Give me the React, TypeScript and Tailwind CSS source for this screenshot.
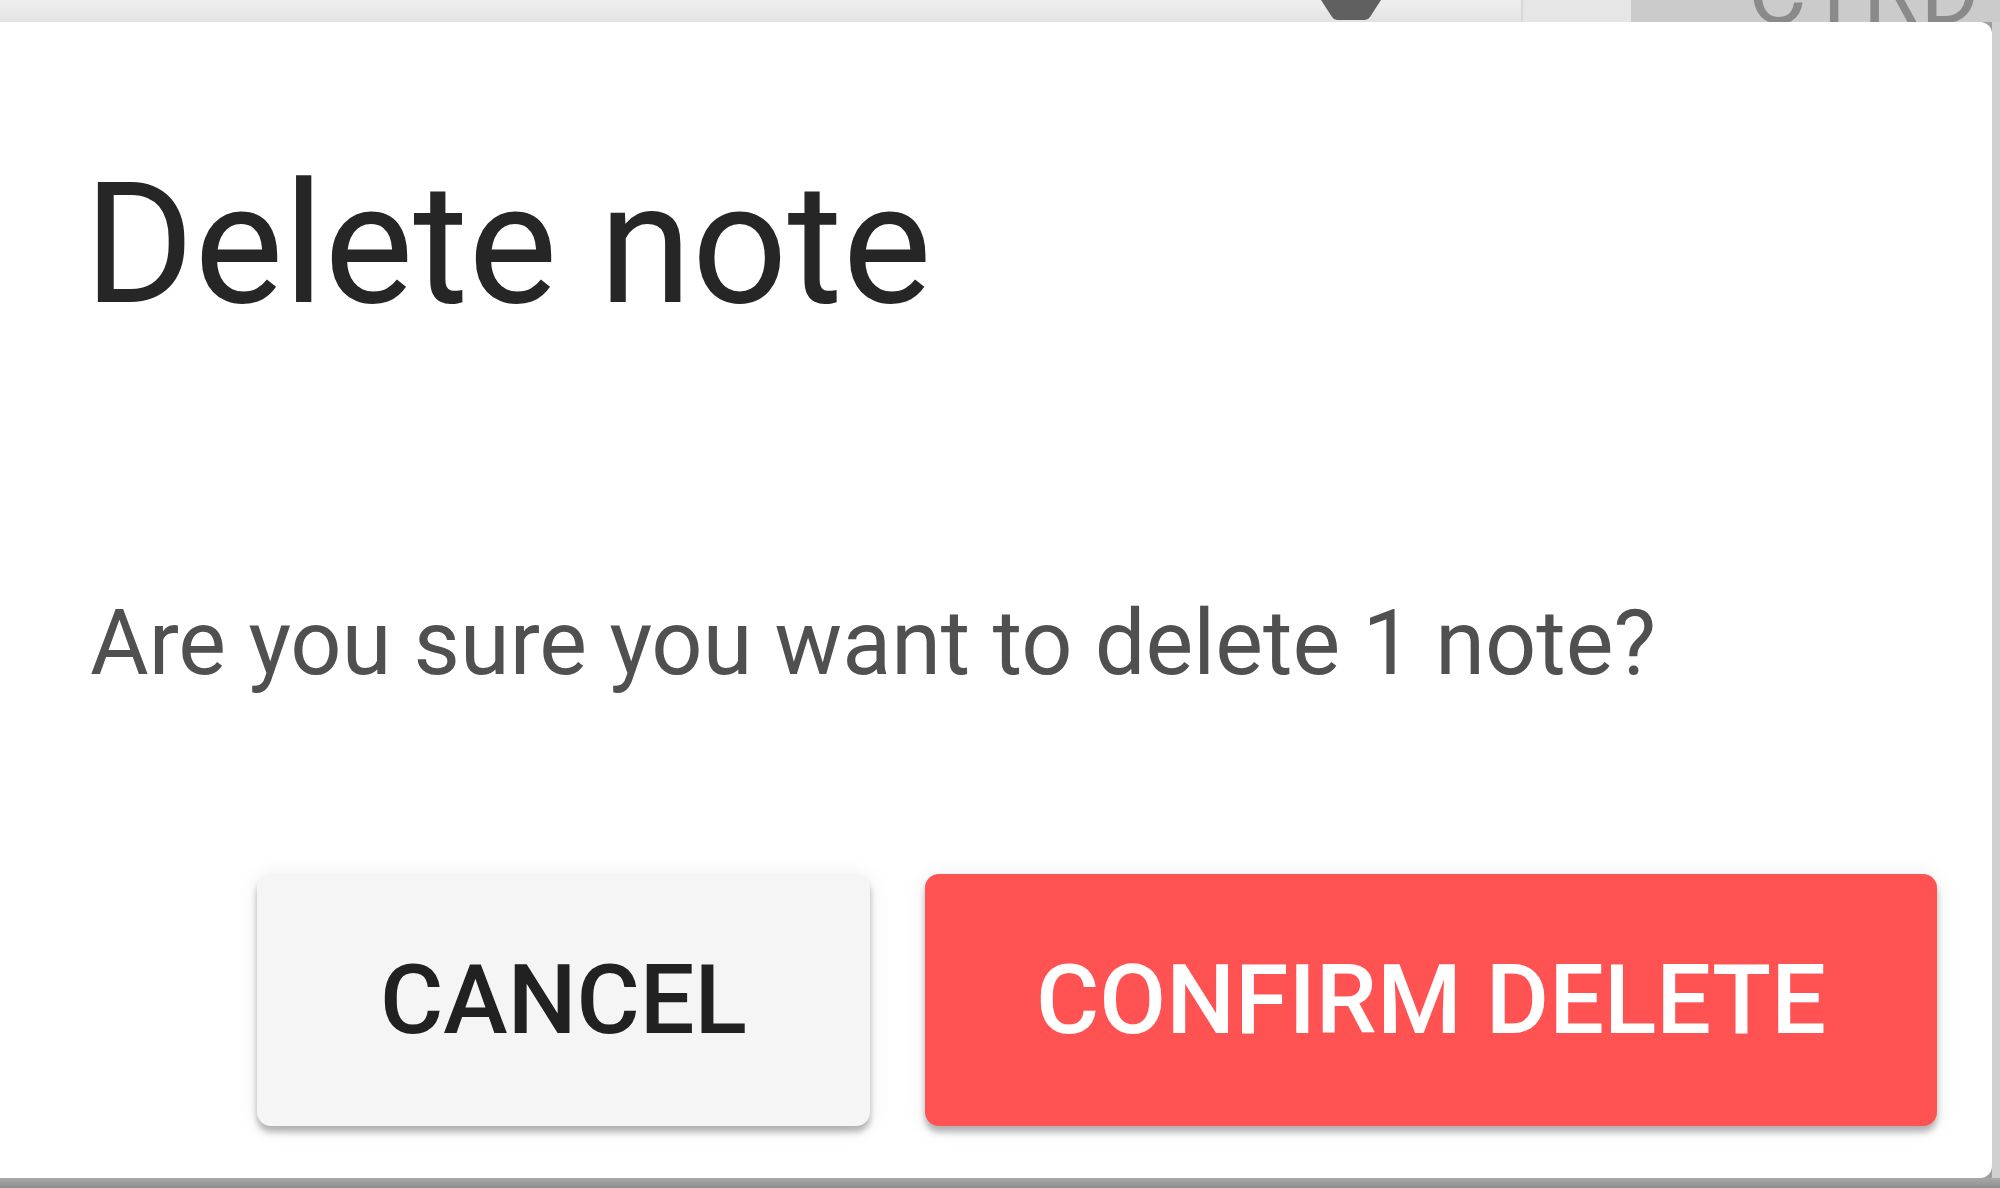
export default function App() {
  return (
    <div className="w-[2000px] h-[1188px] flex flex-col overflow-hidden bg-[#9e9e9e] font-[family-name:Roboto,sans-serif]">
      {/* page behind the dialog, only its bottom edge shows */}
      <div className="h-[22px] shrink-0 flex overflow-hidden bg-gradient-to-b from-[#efefef] to-[#e3e3e3]">
        <svg className="ml-[1321px] shrink-0" width="60" height="20" viewBox="0 0 60 20">
          <path d="M0 0 L60 0 L49 17 Q47 20 44 20 L16 20 Q13 20 11 17 Z" fill="#606060" />
        </svg>
        <div className="ml-[140px] w-[2px] bg-[#d8d8d8]" />
        <div className="w-[108px] bg-[#e6e6e6]" />
        <div className="flex-1 bg-[#cbcbcb] pl-[117px]">
          <div className="mt-[-52px] text-[90px] leading-none tracking-[2px] text-[#8a8a8a] whitespace-nowrap">
            CTRD
          </div>
        </div>
      </div>

      <div className="flex h-[1156px] shrink-0">
        {/* Dialog */}
        <div className="flex-1 flex flex-col bg-white rounded-r-[12px] pt-[139px]">
          <h2 className="pl-[84px] text-[168px] leading-none font-normal text-[#262626] whitespace-nowrap">
            Delete note
          </h2>
          <p className="mt-[270px] pl-[90px] text-[90px] leading-none text-[#505050] whitespace-nowrap">
            Are you sure you want to delete 1 note?
          </p>
          <div className="mt-[185px] flex justify-end gap-[55px] pr-[55px]">
            <button className="w-[613px] h-[252px] flex items-center justify-center rounded-[14px] bg-[#f5f5f5] text-[97px] font-medium leading-none text-[#212121] shadow-[0_6px_6px_rgba(0,0,0,0.28),0_2px_22px_rgba(0,0,0,0.08)]">
              CANCEL
            </button>
            <button className="w-[1012px] h-[252px] flex items-center justify-center rounded-[14px] bg-[#ff5252] text-[97px] font-medium leading-none text-white shadow-[0_6px_6px_rgba(0,0,0,0.28),0_2px_22px_rgba(0,0,0,0.08)]">
              CONFIRM DELETE
            </button>
          </div>
        </div>
        <div className="w-[8px] bg-[#d0d0d0]" />
      </div>

      <div className="h-[10px] shrink-0 bg-gradient-to-b from-[#a8a8a8] to-[#8e8e8e]" />
    </div>
  )
}
